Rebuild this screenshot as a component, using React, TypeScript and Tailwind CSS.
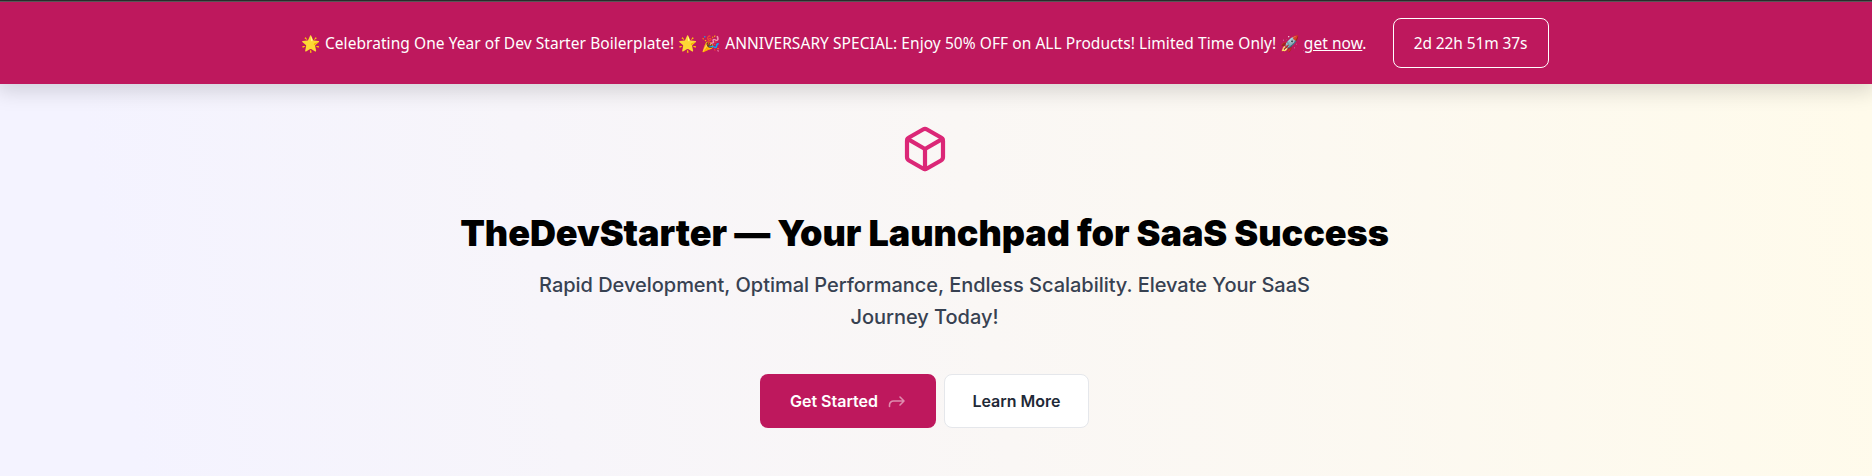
import { FiBox } from "react-icons/fi";

export default function App() {
  return (
    <div className="flex h-[476px] flex-col overflow-hidden bg-[linear-gradient(81deg,#f4f3ff_7%,#faf7f5_52%,#fffbeb_99%)] font-['Inter',sans-serif]">
      <div className="h-0.5 shrink-0 border-b border-[#5d5d5d] bg-[#2e2e2e]" />
      <header className="flex h-[82px] shrink-0 items-center justify-center bg-[#be185d] pr-[22px] font-['Noto_Sans','Noto_Color_Emoji',sans-serif] text-[15.5px] text-white shadow-[0_4px_20px_3px_rgba(0,0,0,0.15)]">
        <p className="w-[1091px] whitespace-nowrap pt-0.5 tracking-[0.06px]">
          🌟 Celebrating One Year of Dev Starter Boilerplate! 🌟 🎉 ANNIVERSARY SPECIAL: Enjoy 50% OFF on ALL
          Products! Limited Time Only! 🚀{" "}
          <a href="#" className="underline">get now</a>.
        </p>
        <div className="flex h-[50px] w-[156px] items-center justify-center rounded-lg border border-white pt-0.5 tracking-[-0.12px] whitespace-nowrap">
          2d 22h 51m 37s
        </div>
      </header>
      <main className="flex flex-col items-center pr-[23px] pt-[41px]">
        <FiBox className="size-12 text-[#db2777]" strokeWidth={2.1} />
        <h1 className="mt-10 whitespace-nowrap text-4xl font-black tracking-[-0.07px] text-black">
          TheDevStarter — Your Launchpad for SaaS Success
        </h1>
        <p className="mt-4 w-[800px] text-center text-xl leading-8 font-medium tracking-[-0.03px] text-[#374151]">
          Rapid Development, Optimal Performance, Endless Scalability. Elevate Your SaaS Journey Today!
        </p>
        <div className="mt-[41px] flex gap-2">
          <button className="flex h-[54px] w-44 items-center justify-center gap-2.5 rounded-lg bg-[#be185d] font-semibold text-white">
            Get Started
            <svg viewBox="0 0 18 14" className="h-3.5 w-[18px] text-white/50" fill="none" stroke="currentColor" strokeWidth="1.6" strokeLinecap="round" strokeLinejoin="round">
              <path d="M1.500 12.500V11a4 4 0 0 1 4-4H16M12 3l4 4-4 4" />
            </svg>
          </button>
          <button className="h-[54px] w-[145px] rounded-lg border border-[#e5e7eb] bg-white font-semibold text-[#1f2937]">
            Learn More
          </button>
        </div>
      </main>
    </div>
  );
}
